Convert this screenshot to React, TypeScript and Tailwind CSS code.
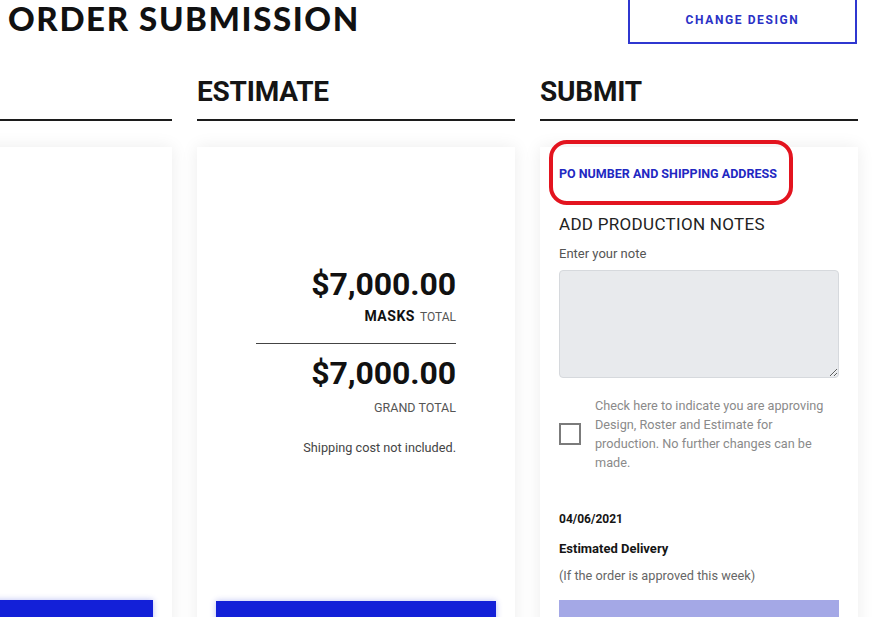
import type { ReactNode } from 'react'

const body = "font-['Roboto','Liberation_Sans',sans-serif]"

function Column({ title, children }: { title: string; children: ReactNode }) {
  return (
    <section className="w-[318px] shrink-0 flex flex-col">
      <h2 className="text-[28px] leading-[28px] font-bold text-[#151515] pb-[13px] border-b-2 border-[#1c1c1c] tracking-[-0.2px]">
        {title}
      </h2>
      <div className="relative mt-[26px] bg-white shadow-[0_0_16px_rgba(0,0,0,0.08)] h-[560px] flex flex-col px-[19px]">
        {children}
      </div>
    </section>
  )
}

function Amount({ value }: { value: string }) {
  return (
    <p className="text-[32px] leading-[32px] font-bold text-[#111] tracking-[-0.1px] text-right">
      {value}
    </p>
  )
}

export default function App() {
  return (
    <div className={`min-h-screen bg-white overflow-hidden ${body}`}>
      {/* Page header */}
      <header className="flex items-start justify-between pl-2 pr-[17px] -mt-[6px]">
        <h1 className="mt-[8px] font-['Lato',sans-serif] font-black text-[33px] leading-[32px] text-[#111] tracking-[1.6px]">
          ORDER SUBMISSION
        </h1>
        <button className="w-[229px] h-[50px] border-2 border-[#2f37d0] text-[#2a31c6] text-[12px] font-bold tracking-[1.6px] pt-[2px]">
          CHANGE DESIGN
        </button>
      </header>

      {/* Steps */}
      <div className="flex gap-[25px] ml-[-146px] mt-[34px]">
        <Column title="ROSTER">
          <div className="mt-[453px] h-[70px] bg-[#1320d8] shadow-[0_0_6px_rgba(19,32,216,0.3)] text-white text-[13px] font-bold flex items-center justify-center">
            EDIT ROSTER
          </div>
        </Column>

        <Column title="ESTIMATE">
          <div className="w-[200px] mx-auto pt-[121px] flex flex-col">
            <Amount value="$7,000.00" />
            <p className="mt-[8px] text-right leading-4">
              <span className="text-[14px] font-bold text-[#111] tracking-[0.5px]">MASKS</span>
              <span className="ml-[5px] text-[12px] text-[#555]">TOTAL</span>
            </p>
            <div className="mt-[18px] border-t border-[#444]" />
            <div className="mt-[13px]">
              <Amount value="$7,000.00" />
            </div>
            <p className="mt-[11px] text-right text-[12.5px] leading-4 text-[#555]">GRAND TOTAL</p>
            <p className="mt-[24px] text-right text-[12.7px] leading-4 text-[#444]">
              Shipping cost not included.
            </p>
          </div>
          <div className="mt-[145px] h-[70px] bg-[#1320d8] shadow-[0_0_6px_rgba(19,32,216,0.3)] text-white text-[13px] font-bold flex items-center justify-center">
            CONTINUE
          </div>
        </Column>

        <Column title="SUBMIT">
          <p className="pt-[19px] text-[12.5px] leading-4 font-bold text-[#2228c2]">
            PO NUMBER AND SHIPPING ADDRESS
          </p>
          {/* highlight ring around the PO link */}
          <div className="absolute left-[9px] top-[-7px] w-[244px] h-[65px] border-[4px] border-[#e3141f] rounded-[18px] pointer-events-none" />
          <h3 className="mt-[30px] text-[17px] leading-6 font-normal text-[#222] tracking-[0.3px]">
            ADD PRODUCTION NOTES
          </h3>
          <label className="mt-[10px] text-[13px] leading-4 text-[#555]">Enter your note</label>
          <textarea className="mt-[8px] h-[108px] w-full bg-[#e8eaed] border border-[#d6d9dd] rounded-[4px] outline-none" />
          <div className="mt-[18px] flex items-center gap-[14px]">
            <div className="w-[22px] h-[22px] shrink-0 border-2 border-[#7b7b7b] bg-white" />
            <p className="w-[232px] text-[12.7px] leading-[19px] text-[#8a8a8a]">
              Check here to indicate you are approving Design, Roster and Estimate for production. No further changes can be made.
            </p>
          </div>
          <p className="mt-[39px] text-[12px] leading-4 font-bold text-[#151515]">04/06/2021</p>
          <p className="mt-[14px] text-[13px] leading-4 font-bold text-[#151515]">Estimated Delivery</p>
          <p className="mt-[11px] text-[12.75px] leading-4 text-[#666]">(If the order is approved this week)</p>
          <div className="mt-[16px] h-[70px] bg-[#a4a8e6] text-white text-[13px] font-bold flex items-center justify-center">
            SUBMIT ORDER
          </div>
        </Column>
      </div>
    </div>
  )
}
